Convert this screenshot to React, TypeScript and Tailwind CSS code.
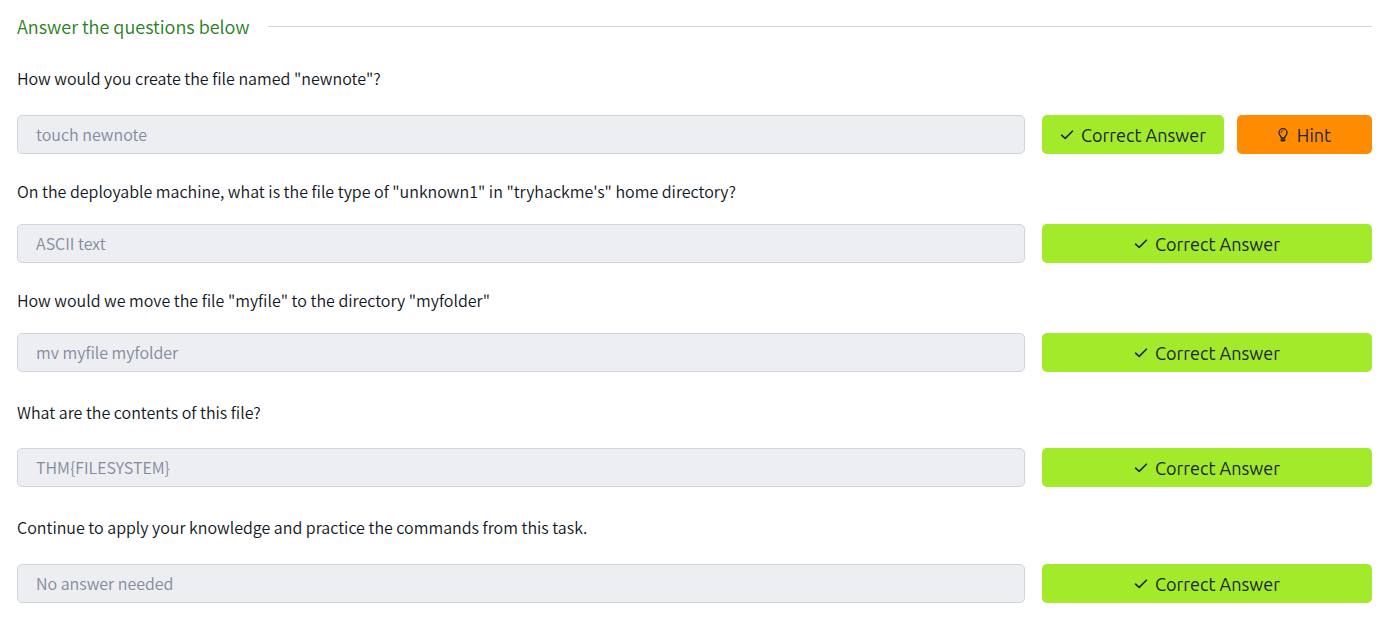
import React from "react";

type Question = {
  id: string;
  text: string;
  answer: string;
  hint?: boolean;
  spacing: string;
};

const questions: Question[] = [
  { id: "q1", text: 'How would you create the file named "newnote"?', answer: "touch newnote", hint: true, spacing: "mt-[26px] gap-[25px]" },
  { id: "q2", text: 'On the deployable machine, what is the file type of "unknown1" in "tryhackme\'s" home directory?', answer: "ASCII text", spacing: "mt-[25px] gap-[21px]" },
  { id: "q3", text: 'How would we move the file "myfile" to the directory "myfolder"', answer: "mv myfile myfolder", spacing: "mt-[25px] gap-[21px]" },
  { id: "q4", text: "What are the contents of this file?", answer: "THM{FILESYSTEM}", spacing: "mt-7 gap-6" },
  { id: "q5", text: "Continue to apply your knowledge and practice the commands from this task.", answer: "No answer needed", spacing: "mt-7 gap-[25px]" },
];

function CheckIcon() {
  return (
    <svg viewBox="0 0 14 14" className="size-[14px] shrink-0" fill="none" stroke="currentColor" strokeWidth="1.6" strokeLinecap="round" strokeLinejoin="round" aria-hidden="true">
      <path d="M1.6 7.2 5.2 10.4 12.4 3.2" />
    </svg>
  );
}

function BulbIcon() {
  return (
    <svg viewBox="0 0 10 14" className="h-[14px] w-[10px] shrink-0" fill="none" stroke="currentColor" strokeLinecap="round" strokeLinejoin="round" aria-hidden="true">
      <path strokeWidth="1.3" d="M3.2 10V9.4C3.2 8.3 1 7.2 1 4.7A4 4 0 0 1 9 4.7C9 7.2 6.8 8.3 6.8 9.4V10Z" />
      <path strokeWidth="0.8" d="M2.9 4.7A2.1 2.1 0 0 1 5 2.7" />
      <path fill="currentColor" stroke="none" d="M2.6 11.2H7.4V12.4L6.4 13.6H3.6L2.6 12.4Z" />
    </svg>
  );
}

const buttonBase =
  "flex h-[39px] items-center justify-center rounded-[5px] font-['Ubuntu','Noto_Sans',sans-serif] text-lg leading-6 text-[#1b2436] whitespace-nowrap";

function QuestionRow({ question }: { question: Question }) {
  return (
    <div className={`flex flex-col ${question.spacing}`}>
      <label htmlFor={question.id} className="text-base leading-6 font-[350] text-[#101623]">
        {question.text}
      </label>
      <div className="flex gap-[17px]">
        <input
          id={question.id}
          type="text"
          disabled
          defaultValue={question.answer}
          className="h-[39px] min-w-0 flex-1 rounded-[5px] border border-[#d0d5dd] bg-[#edeef2] px-[18px] pb-0.5 text-base leading-6 font-[350] text-[#828b9d]"
        />
        <div className="flex w-[330px] gap-[13px]">
          <button type="button" className={`${buttonBase} flex-1 gap-[7px] bg-[#a3ea2a]`}>
            <CheckIcon />
            Correct Answer
          </button>
          {question.hint && (
            <button type="button" className={`${buttonBase} w-[135px] gap-[9px] bg-[#ff8b00]`}>
              <BulbIcon />
              Hint
            </button>
          )}
        </div>
      </div>
    </div>
  );
}

export default function App() {
  return (
    <main className="bg-white pt-3 pr-[19px] pb-6 pl-[17px] font-['Source_Sans_Pro','Noto_Sans_CJK_SC',sans-serif]">
      <div className="flex items-center gap-[18px]">
        <h2 className="text-lg leading-7 font-[350] text-[#288020]">Answer the questions below</h2>
        <div className="h-px flex-1 bg-[#d3d6dd]" />
      </div>
      {questions.map((question) => (
        <QuestionRow key={question.id} question={question} />
      ))}
    </main>
  );
}
